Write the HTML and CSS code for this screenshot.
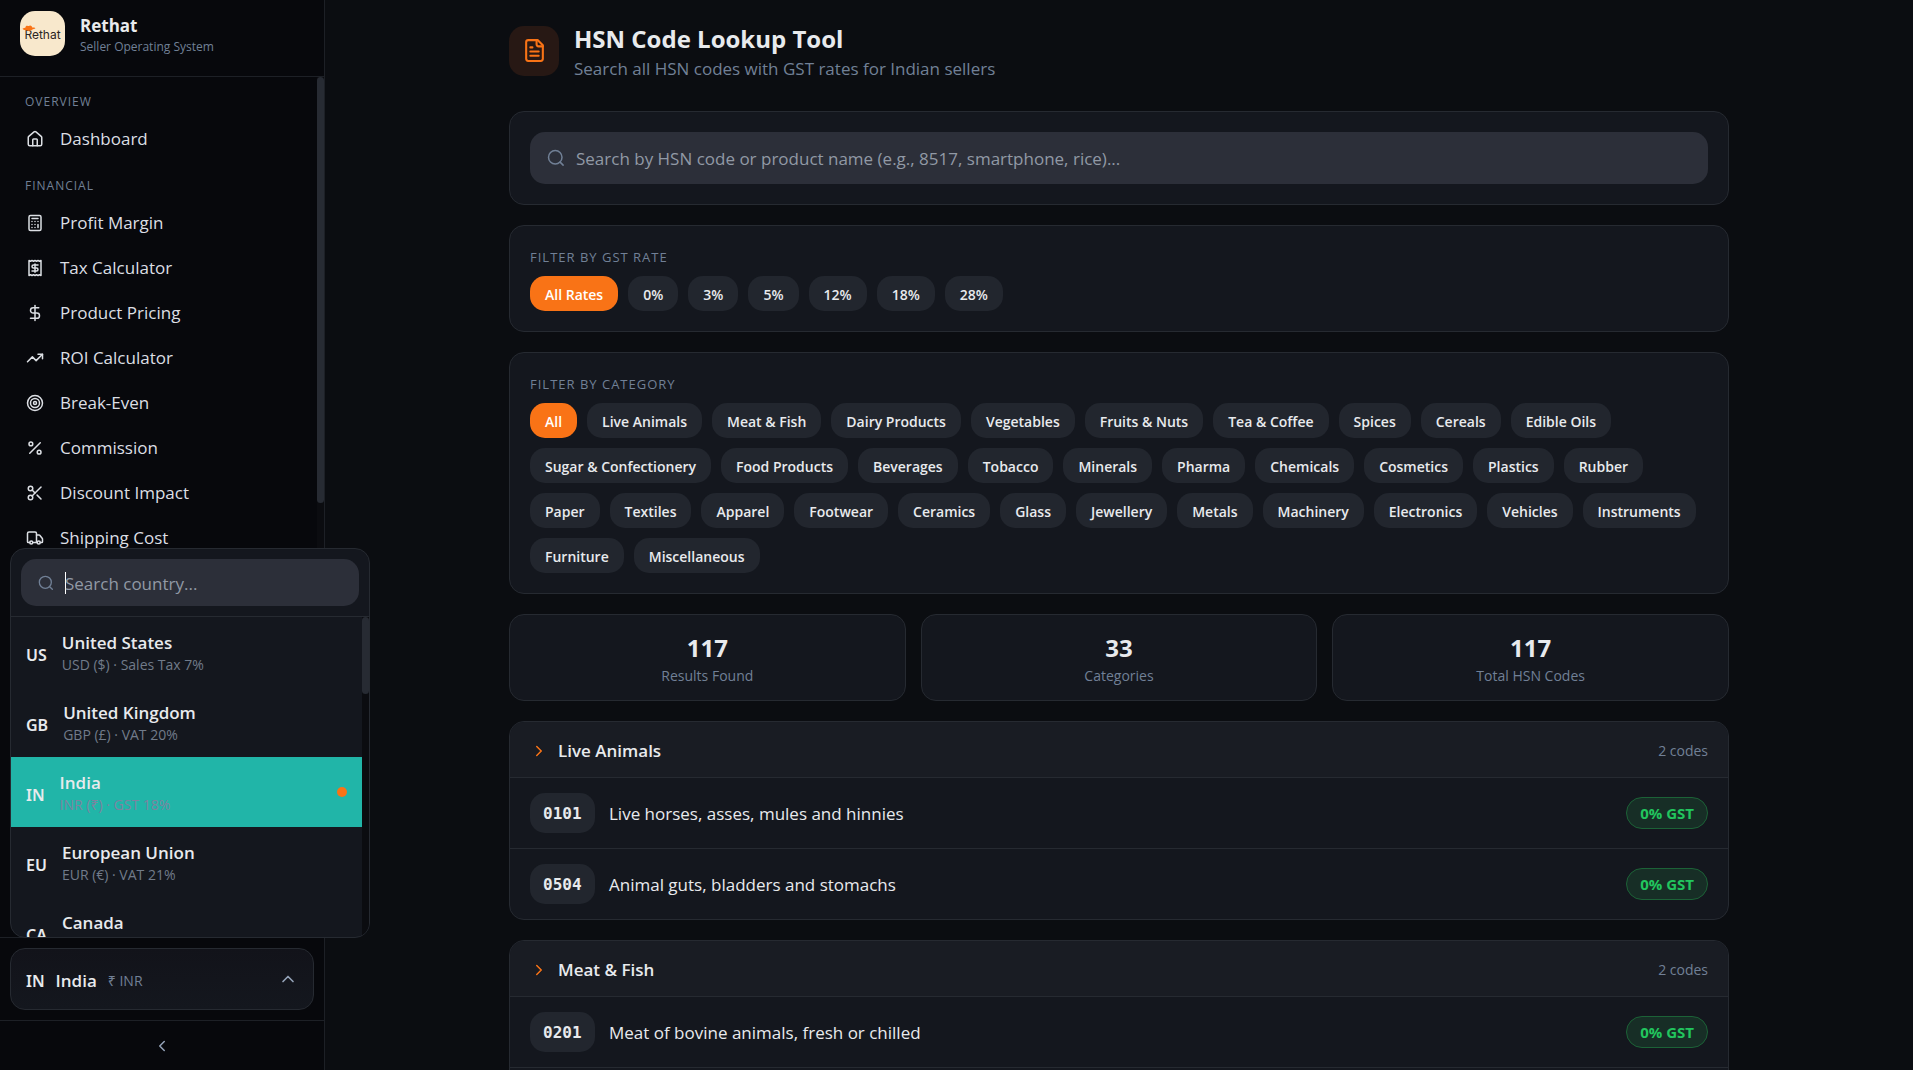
FILE: index.html
```html
<!DOCTYPE html>
<html lang="en">
<head>
    <meta charset="UTF-8">
    <meta name="viewport" content="width=device-width, initial-scale=1.0">
    <title>HSN Code Lookup Tool - Rethat</title>
    <link rel="stylesheet" href="styles.css">
</head>
<body>
    <div class="app">
        <aside class="sidebar">
            <div class="brand">
                <div class="brand-logo">
                    <svg class="brand-hat" viewBox="0 0 24 12" aria-hidden="true">
                        <path d="M1 7c2-1.500 4-1 5-2 0-2 1-3 3-3 1 0 1.500.6 2.500.6S13.500 1.400 15 2c2 .7 2 2 2.500 3.200 2 .2 4.500-.2 5.500 1.300-1 1.500-5 1.300-6.500 3C14 11.500 8 11.500 7 9.500 5 10 1.500 9 1 7z" fill="#f97316"/>
                    </svg>
                    <span>Rethat</span>
                </div>
                <div class="brand-text">
                    <strong>Rethat</strong>
                    <span>Seller Operating System</span>
                </div>
            </div>

            <div class="nav-area">
                <nav class="nav">
                    <div class="nav-section">
                        <h2 class="nav-title">Overview</h2>
                        <a href="#" class="nav-item">
                            <svg class="icon" viewBox="0 0 24 24"><path d="M15 21v-8a1 1 0 0 0-1-1h-4a1 1 0 0 0-1 1v8"/><path d="M3 10a2 2 0 0 1 .709-1.528l7-5.999a2 2 0 0 1 2.582 0l7 5.999A2 2 0 0 1 21 10v9a2 2 0 0 1-2 2H5a2 2 0 0 1-2-2z"/></svg>
                            Dashboard
                        </a>
                    </div>
                    <div class="nav-section">
                        <h2 class="nav-title">Financial</h2>
                        <a href="#" class="nav-item">
                            <svg class="icon" viewBox="0 0 24 24"><rect width="16" height="20" x="4" y="2" rx="2"/><path d="M8 6h8M16 14v4M16 10h.01M12 10h.01M8 10h.01M12 14h.01M8 14h.01M12 18h.01M8 18h.01"/></svg>
                            Profit Margin
                        </a>
                        <a href="#" class="nav-item">
                            <svg class="icon" viewBox="0 0 24 24"><path d="M4 2v20l2-1 2 1 2-1 2 1 2-1 2 1 2-1 2 1V2l-2 1-2-1-2 1-2-1-2 1-2-1-2 1Z"/><path d="M16 8h-6a2 2 0 1 0 0 4h4a2 2 0 1 1 0 4H8"/><path d="M12 17.500v-11"/></svg>
                            Tax Calculator
                        </a>
                        <a href="#" class="nav-item">
                            <svg class="icon" viewBox="0 0 24 24"><path d="M12 2v20"/><path d="M17 5H9.500a3.500 3.500 0 0 0 0 7h5a3.500 3.500 0 0 1 0 7H6"/></svg>
                            Product Pricing
                        </a>
                        <a href="#" class="nav-item">
                            <svg class="icon" viewBox="0 0 24 24"><path d="M22 7l-8.500 8.500-5-5L2 17"/><path d="M16 7h6v6"/></svg>
                            ROI Calculator
                        </a>
                        <a href="#" class="nav-item">
                            <svg class="icon" viewBox="0 0 24 24"><circle cx="12" cy="12" r="10"/><circle cx="12" cy="12" r="6"/><circle cx="12" cy="12" r="2"/></svg>
                            Break-Even
                        </a>
                        <a href="#" class="nav-item">
                            <svg class="icon" viewBox="0 0 24 24"><path d="M19 5L5 19"/><circle cx="6.500" cy="6.500" r="2.500"/><circle cx="17.500" cy="17.500" r="2.500"/></svg>
                            Commission
                        </a>
                        <a href="#" class="nav-item">
                            <svg class="icon" viewBox="0 0 24 24"><circle cx="6" cy="6" r="3"/><path d="M8.120 8.120L12 12"/><path d="M20 4L8.120 15.880"/><circle cx="6" cy="18" r="3"/><path d="M14.800 14.800L20 20"/></svg>
                            Discount Impact
                        </a>
                        <a href="#" class="nav-item">
                            <svg class="icon" viewBox="0 0 24 24"><path d="M14 18V6a2 2 0 0 0-2-2H4a2 2 0 0 0-2 2v11a1 1 0 0 0 1 1h2"/><path d="M15 18H9"/><path d="M19 18h2a1 1 0 0 0 1-1v-3.650a1 1 0 0 0-.22-.624l-3.480-4.350A1 1 0 0 0 17.520 8H14"/><circle cx="17" cy="18" r="2"/><circle cx="7" cy="18" r="2"/></svg>
                            Shipping Cost
                        </a>
                    </div>
                </nav>
                <div class="scrollbar nav-scrollbar"><div class="thumb"></div></div>
            </div>

            <div class="country">
                <div class="country-menu">
                    <div class="country-search">
                        <label class="search-box search-box-small">
                            <svg class="icon" viewBox="0 0 24 24"><circle cx="11" cy="11" r="9"/><path d="M21.500 21.500l-4-4"/></svg>
                            <span class="caret"></span>
                            <input type="text" placeholder="Search country..." aria-label="Search country">
                        </label>
                    </div>
                    <div class="country-body">
                        <div class="country-list">
                            <button type="button" class="country-option">
                                <span class="country-code">US</span>
                                <span class="country-info"><b>United States</b><small>USD ($) · Sales Tax 7%</small></span>
                            </button>
                            <button type="button" class="country-option">
                                <span class="country-code">GB</span>
                                <span class="country-info"><b>United Kingdom</b><small>GBP (£) · VAT 20%</small></span>
                            </button>
                            <button type="button" class="country-option selected">
                                <span class="country-code">IN</span>
                                <span class="country-info"><b>India</b><small>INR (₹) · GST 18%</small></span>
                                <span class="dot"></span>
                            </button>
                            <button type="button" class="country-option">
                                <span class="country-code">EU</span>
                                <span class="country-info"><b>European Union</b><small>EUR (€) · VAT 21%</small></span>
                            </button>
                            <button type="button" class="country-option">
                                <span class="country-code">CA</span>
                                <span class="country-info"><b>Canada</b><small>CAD ($) · GST 5%</small></span>
                            </button>
                        </div>
                        <div class="scrollbar country-scrollbar"><div class="thumb"></div></div>
                    </div>
                </div>
                <button type="button" class="country-button" aria-expanded="true">
                    <span class="country-code">IN</span>
                    <b>India</b>
                    <small>₹ INR</small>
                    <svg class="icon" viewBox="0 0 24 24"><path d="M18 15l-6-6-6 6"/></svg>
                </button>
            </div>
            <button type="button" class="collapse" aria-label="Collapse sidebar">
                <svg class="icon" viewBox="0 0 24 24"><path d="M15 18l-6-6 6-6"/></svg>
            </button>
        </aside>

        <main class="main">
            <div class="content">
                <header class="page-header">
                    <div class="page-icon">
                        <svg class="icon" viewBox="0 0 24 24"><path d="M15 2H6a2 2 0 0 0-2 2v16a2 2 0 0 0 2 2h12a2 2 0 0 0 2-2V7Z"/><path d="M14 2v4a2 2 0 0 0 2 2h4M10 9H8M16 13H8M16 17H8"/></svg>
                    </div>
                    <div class="page-title">
                        <h1>HSN Code Lookup Tool</h1>
                        <p>Search all HSN codes with GST rates for Indian sellers</p>
                    </div>
                </header>

                <section class="card">
                    <label class="search-box">
                        <svg class="icon" viewBox="0 0 24 24"><circle cx="11" cy="11" r="9"/><path d="M21.500 21.500l-4-4"/></svg>
                        <input type="text" placeholder="Search by HSN code or product name (e.g., 8517, smartphone, rice)..." aria-label="Search HSN codes">
                    </label>
                </section>

                <section class="card">
                    <h2 class="filter-title">Filter by GST rate</h2>
                    <div class="chips">
                        <button type="button" class="chip active">All Rates</button>
                        <button type="button" class="chip">0%</button>
                        <button type="button" class="chip">3%</button>
                        <button type="button" class="chip">5%</button>
                        <button type="button" class="chip">12%</button>
                        <button type="button" class="chip">18%</button>
                        <button type="button" class="chip">28%</button>
                    </div>
                </section>

                <section class="card">
                    <h2 class="filter-title">Filter by category</h2>
                    <div class="chips">
                        <button type="button" class="chip active">All</button>
                        <button type="button" class="chip">Live Animals</button>
                        <button type="button" class="chip">Meat &amp; Fish</button>
                        <button type="button" class="chip">Dairy Products</button>
                        <button type="button" class="chip">Vegetables</button>
                        <button type="button" class="chip">Fruits &amp; Nuts</button>
                        <button type="button" class="chip">Tea &amp; Coffee</button>
                        <button type="button" class="chip">Spices</button>
                        <button type="button" class="chip">Cereals</button>
                        <button type="button" class="chip">Edible Oils</button>
                        <button type="button" class="chip">Sugar &amp; Confectionery</button>
                        <button type="button" class="chip">Food Products</button>
                        <button type="button" class="chip">Beverages</button>
                        <button type="button" class="chip">Tobacco</button>
                        <button type="button" class="chip">Minerals</button>
                        <button type="button" class="chip">Pharma</button>
                        <button type="button" class="chip">Chemicals</button>
                        <button type="button" class="chip">Cosmetics</button>
                        <button type="button" class="chip">Plastics</button>
                        <button type="button" class="chip">Rubber</button>
                        <button type="button" class="chip">Paper</button>
                        <button type="button" class="chip">Textiles</button>
                        <button type="button" class="chip">Apparel</button>
                        <button type="button" class="chip">Footwear</button>
                        <button type="button" class="chip">Ceramics</button>
                        <button type="button" class="chip">Glass</button>
                        <button type="button" class="chip">Jewellery</button>
                        <button type="button" class="chip">Metals</button>
                        <button type="button" class="chip">Machinery</button>
                        <button type="button" class="chip">Electronics</button>
                        <button type="button" class="chip">Vehicles</button>
                        <button type="button" class="chip">Instruments</button>
                        <button type="button" class="chip">Furniture</button>
                        <button type="button" class="chip">Miscellaneous</button>
                    </div>
                </section>

                <section class="stats">
                    <div class="stat"><strong>117</strong><span>Results Found</span></div>
                    <div class="stat"><strong>33</strong><span>Categories</span></div>
                    <div class="stat"><strong>117</strong><span>Total HSN Codes</span></div>
                </section>

                <section class="group">
                    <button type="button" class="group-header">
                        <svg class="icon" viewBox="0 0 24 24"><path d="M9 18l6-6-6-6"/></svg>
                        <b>Live Animals</b>
                        <span>2 codes</span>
                    </button>
                    <table>
                        <tr>
                            <td class="col-code"><span class="code">0101</span></td>
                            <td class="col-name">Live horses, asses, mules and hinnies</td>
                            <td class="col-rate"><span class="rate">0% GST</span></td>
                        </tr>
                        <tr>
                            <td class="col-code"><span class="code">0504</span></td>
                            <td class="col-name">Animal guts, bladders and stomachs</td>
                            <td class="col-rate"><span class="rate">0% GST</span></td>
                        </tr>
                    </table>
                </section>

                <section class="group">
                    <button type="button" class="group-header">
                        <svg class="icon" viewBox="0 0 24 24"><path d="M9 18l6-6-6-6"/></svg>
                        <b>Meat &amp; Fish</b>
                        <span>2 codes</span>
                    </button>
                    <table>
                        <tr>
                            <td class="col-code"><span class="code">0201</span></td>
                            <td class="col-name">Meat of bovine animals, fresh or chilled</td>
                            <td class="col-rate"><span class="rate">0% GST</span></td>
                        </tr>
                        <tr>
                            <td class="col-code"><span class="code">0302</span></td>
                            <td class="col-name">Fish, fresh or chilled</td>
                            <td class="col-rate"><span class="rate">0% GST</span></td>
                        </tr>
                    </table>
                </section>
            </div>
        </main>
    </div>
</body>
</html>
```

FILE: styles.css
```css
:root {
    --bg: #0b0d11;
    --sidebar: #07080c;
    --card: #14171e;
    --raised: #191c23;
    --chip: #22262e;
    --field: #2c2f39;
    --border: #262a31;
    --text: #e8eaed;
    --muted: #718096;
    --orange: #f97316;
    --green: #22c55e;
}

* {
    box-sizing: border-box;
}

body {
    margin: 0;
    background: var(--bg);
    color: var(--text);
    font-family: "Open Sans", "Noto Sans", sans-serif;
    font-size: 17px;
    line-height: 24px;
}

button,
input {
    font: inherit;
    color: inherit;
}

button {
    cursor: pointer;
}

h1, h2, p {
    margin: 0;
}

b {
    font-weight: 600;
}

.icon {
    flex: none;
    width: 18px;
    height: 18px;
    fill: none;
    stroke: currentColor;
    stroke-width: 2;
    stroke-linecap: round;
    stroke-linejoin: round;
}

.app {
    display: flex;
    height: 100vh;
    overflow: hidden;
}

/* Sidebar */
.sidebar {
    position: relative;
    z-index: 2;
    flex: none;
    display: flex;
    flex-direction: column;
    width: 325px;
    background: var(--sidebar);
    border-right: 1px solid #1d2026;
}

.brand {
    display: flex;
    align-items: flex-start;
    gap: 15px;
    height: 77px;
    padding: 11px 20px;
    border-bottom: 1px solid #1d2026;
}

.brand-logo {
    position: relative;
    display: flex;
    align-items: center;
    justify-content: center;
    width: 45px;
    height: 45px;
    padding-top: 3px;
    border-radius: 15px;
    background: #f8e8cc;
    color: #2b2523;
    font-family: "Inter", sans-serif;
    font-size: 12px;
}

.brand-hat {
    position: absolute;
    left: 2px;
    top: 13px;
    width: 14px;
    height: 8px;
}

.brand-text {
    display: flex;
    flex-direction: column;
    padding-top: 1px;
}

.brand-text strong {
    line-height: 28px;
}

.brand-text span {
    color: var(--muted);
    font-size: 12px;
    line-height: 14px;
}

.nav-area {
    flex: 1;
    display: flex;
    min-height: 0;
}

.nav {
    flex: 1;
    padding: 16px 10px;
    overflow: hidden;
}

.nav-section {
    margin-bottom: 15px;
}

.nav-title {
    padding: 0 15px 6px;
    color: var(--muted);
    font-size: 12px;
    font-weight: 400;
    line-height: 18px;
    letter-spacing: 1px;
    text-transform: uppercase;
}

.nav-item {
    display: flex;
    align-items: center;
    gap: 16px;
    height: 45px;
    padding: 0 16px 2px;
    color: #dcdfe4;
    text-decoration: none;
}

.scrollbar {
    flex: none;
    width: 7px;
    background: #0b0c10;
}

.scrollbar .thumb {
    border-radius: 4px;
    background: #272b33;
}

.nav-scrollbar .thumb {
    height: 426px;
}

/* Country picker */
.country {
    position: relative;
    padding: 10px;
    border-top: 1px solid #1d2026;
}

.country-button {
    display: flex;
    align-items: center;
    gap: 11px;
    width: 100%;
    height: 62px;
    padding: 3px 15px 0;
    border: 1px solid var(--border);
    border-radius: 15px;
    background: linear-gradient(#12131a, #14171e);
}

.country-button small {
    color: var(--muted);
    font-size: 14px;
}

.country-button .icon {
    width: 20px;
    height: 20px;
    margin-left: auto;
    margin-bottom: 3px;
    color: #94a3b8;
}

.country-code {
    font-family: "Noto Sans", sans-serif;
    font-size: 16px;
    font-weight: 600;
}

.country-menu {
    position: absolute;
    left: 10px;
    bottom: 100%;
    width: 360px;
    border: 1px solid var(--border);
    border-radius: 15px;
    background: var(--card);
    overflow: hidden;
}

.country-search {
    padding: 10px;
    border-bottom: 1px solid var(--border);
}

.country-body {
    display: flex;
    height: 320px;
    overflow: hidden;
}

.country-list {
    flex: 1;
}

.country-option {
    display: flex;
    align-items: center;
    gap: 15px;
    width: 100%;
    height: 70px;
    padding: 0 15px;
    border: 0;
    background: none;
    text-align: left;
}

.country-option .country-code {
    padding-top: 6px;
}

.country-option.selected {
    background: #21b5a8;
}

.country-info {
    display: flex;
    flex-direction: column;
    padding-top: 4px;
}

.country-info b {
    line-height: 22px;
}

.country-info small {
    color: #717b8a;
    font-size: 14px;
    line-height: 22px;
}

.selected .country-info small {
    color: #7d83a0;
}

.dot {
    width: 10px;
    height: 10px;
    margin-left: auto;
    border-radius: 50%;
    background: var(--orange);
}

.country-scrollbar .thumb {
    height: 77px;
}

.collapse {
    display: flex;
    align-items: center;
    justify-content: center;
    height: 50px;
    padding: 0;
    border: 0;
    border-top: 1px solid #1d2026;
    background: none;
    color: #94a3b8;
}

/* Search fields */
.search-box {
    display: flex;
    align-items: center;
    gap: 11px;
    height: 52px;
    padding: 0 17px;
    border-radius: 15px;
    background: var(--field);
}

.search-box .icon {
    color: var(--muted);
}

.search-box input {
    flex: 1;
    min-width: 0;
    padding: 2px 0 0;
    border: 0;
    outline: 0;
    background: none;
}

.search-box input::placeholder {
    color: #9199a5;
    opacity: 1;
}

.search-box-small {
    height: 47px;
    gap: 0;
}

.search-box-small .icon {
    width: 16px;
    height: 16px;
    margin-right: 11px;
}

.caret {
    width: 1px;
    height: 22px;
    margin-right: -1px;
    background: #fff;
}

/* Main column */
.main {
    flex: 1;
    min-width: 0;
    padding: 20px 30px;
    overflow: hidden;
}

.content {
    max-width: 1220px;
    margin: 0 auto;
}

.page-header {
    display: flex;
    align-items: center;
    gap: 15px;
    margin-bottom: 30px;
}

.page-icon {
    display: flex;
    align-items: center;
    justify-content: center;
    width: 50px;
    height: 50px;
    border-radius: 15px;
    background: #271814;
    color: var(--orange);
}

.page-icon .icon {
    width: 25px;
    height: 25px;
}

.page-title {
    padding-bottom: 2px;
}

.page-header h1 {
    font-size: 24px;
    font-weight: 700;
    line-height: 38px;
}

.page-header p {
    color: var(--muted);
    line-height: 21px;
}

.card,
.stat,
.group {
    border: 1px solid var(--border);
    border-radius: 15px;
    background: var(--card);
}

.card {
    margin-bottom: 20px;
    padding: 20px;
}

.filter-title {
    padding-top: 1px;
    margin-bottom: 9px;
    color: var(--muted);
    font-size: 13px;
    font-weight: 500;
    line-height: 20px;
    letter-spacing: 1px;
    text-transform: uppercase;
}

.chips {
    display: flex;
    flex-wrap: wrap;
    gap: 10px;
}

.chip {
    height: 35px;
    padding: 2px 15px 0;
    border: 0;
    border-radius: 15px;
    background: var(--chip);
    font-size: 14px;
    font-weight: 600;
}

.chip.active {
    background: var(--orange);
    color: #fff;
}

.stats {
    display: grid;
    grid-template-columns: repeat(3, 1fr);
    gap: 15px;
    margin-bottom: 20px;
}

.stat {
    display: flex;
    flex-direction: column;
    align-items: center;
    padding: 15px;
}

.stat strong {
    font-size: 24px;
    line-height: 36px;
}

.stat span {
    color: var(--muted);
    font-size: 14px;
    line-height: 19px;
}

/* Code groups */
.group {
    margin-bottom: 20px;
    overflow: hidden;
}

.group-header {
    display: flex;
    align-items: center;
    gap: 10px;
    width: 100%;
    height: 55px;
    padding: 2px 20px 0;
    border: 0;
    background: var(--raised);
    text-align: left;
}

.group-header .icon {
    color: var(--orange);
}

.group-header span {
    margin-left: auto;
    color: var(--muted);
    font-size: 14px;
}

.group table {
    width: 100%;
    border-spacing: 0;
}

.group td {
    height: 71px;
    padding: 0;
    border-top: 1px solid var(--border);
}

.group .col-code {
    width: 99px;
    padding-left: 20px;
}

.group .col-name {
    padding-top: 2px;
}

.group .col-rate {
    width: 120px;
    padding-right: 20px;
    text-align: right;
}

.code {
    display: inline-block;
    padding: 2px 13px 0;
    border-radius: 15px;
    background: var(--chip);
    font-family: "DejaVu Sans Mono", monospace;
    font-size: 16px;
    font-weight: 700;
    line-height: 38px;
}

.rate {
    display: inline-block;
    padding: 0 13px;
    border: 1px solid #1c6237;
    border-radius: 16px;
    background: #172e26;
    color: var(--green);
    font-size: 15px;
    font-weight: 700;
    line-height: 30px;
}
```
